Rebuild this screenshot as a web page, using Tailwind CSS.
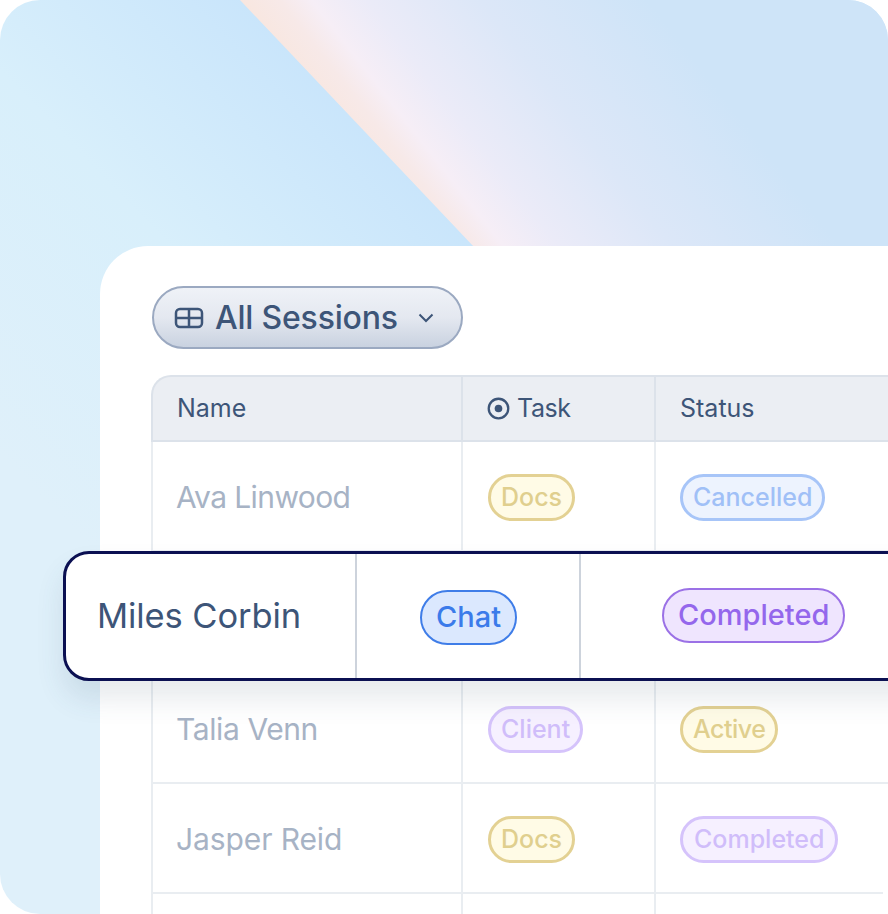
<!DOCTYPE html>
<html lang="en">
<head>
  <meta charset="UTF-8" />
  <title>All Sessions</title>
  <script src="https://cdn.jsdelivr.net/npm/@tailwindcss/browser@4"></script>
</head>
<body class="bg-white">
  <div class="relative w-[888px] h-[914px] overflow-hidden font-[Inter,sans-serif]">
    <!-- background panel and light beam behind the card -->
    <div class="absolute inset-0 overflow-hidden rounded-[40px] bg-[linear-gradient(46deg,#dff0fa_0%,#dff0fa_25%,#d8effb_46%,#c9e5fb_64%)]">
      <div class="absolute inset-0 [clip-path:polygon(240px_0,888px_0,888px_914px,1106px_914px)] bg-[linear-gradient(52deg,#f9e5da_58%,#f7e9e8_62%,#f6eef6_64%,#ebebf8_67.5%,#dce7f8_74.5%,#cee4f8_85%)]"></div>
    </div>

    <div class="relative pt-[246px] pl-[100px]">
      <div class="w-[788px] h-[668px] bg-white rounded-tl-[48px] pt-[40px] pl-[52px]">
        <!-- view picker -->
        <button class="flex items-center w-[311px] h-[63px] pl-[20px] rounded-full border-2 border-[#9ba9c1] bg-[linear-gradient(180deg,#eff2f7_0%,#e4e8f0_50%,#c9d2e0_100%)] text-[#3d5578]">
          <svg class="w-[30px] h-[22px]" viewBox="0 0 30 22" fill="none" stroke="currentColor" stroke-width="2.5">
            <rect x="2" y="2" width="26" height="18" rx="4" />
            <path d="M2 11h26M15 2v18" />
          </svg>
          <span class="ml-[11px] text-[32px] leading-none font-medium tracking-[-0.2px]">All Sessions</span>
          <svg class="ml-[20px] w-[16px] h-[10px]" viewBox="0 0 16 10" fill="none" stroke="currentColor" stroke-width="2">
            <path d="M1.5 1.5 8 8l6.5-6.5" />
          </svg>
        </button>

        <!-- table -->
        <div class="mt-[26px] -ml-[1px] w-[737px] text-[#3d5578]">
          <div class="grid grid-cols-[310px_193px_1fr] h-[67px] bg-[#ebeef3] border-2 border-r-0 border-[#dce2ea] rounded-tl-[20px] text-[25px]">
            <div class="flex items-center pl-[24px] border-r-2 border-[#dce2ea]">Name</div>
            <div class="flex items-center gap-[7px] pl-[24px] border-r-2 border-[#dce2ea]">
              <svg class="w-[23px] h-[23px]" viewBox="0 0 24 24" fill="none">
                <circle cx="12" cy="12" r="10.2" stroke="currentColor" stroke-width="2.4" />
                <circle cx="12" cy="12" r="4" fill="currentColor" />
              </svg>
              <span class="tracking-[-0.4px]">Task</span>
            </div>
            <div class="flex items-center pl-[24px]">Status</div>
          </div>

          <div class="grid grid-cols-[310px_193px_1fr] h-[110px] border-l-2 border-b-2 border-[#e9edf1] text-[30px] text-[#a7b3c5]">
            <div class="flex items-center pl-[23px] pt-[3px] border-r-2 border-[#e9edf1] tracking-[-0.6px]">Ava Linwood</div>
            <div class="flex items-center pl-[25px] pt-[3px] border-r-2 border-[#e9edf1]">
              <span class="flex items-center h-[47px] px-[10px] rounded-full border-[3px] border-[#e3d193] bg-[#fffbe6] text-[#e0cf8e] text-[25px] font-medium">Docs</span>
            </div>
            <div class="flex items-center pl-[24px] pt-[3px]">
              <span class="flex items-center h-[47px] px-[10px] rounded-full border-[3px] border-[#a7c5f8] bg-[#edf3fe] text-[#a0c0f7] text-[25px] font-medium">Cancelled</span>
            </div>
          </div>

          <!-- row covered by the highlighted one -->
          <div class="grid grid-cols-[310px_193px_1fr] h-[122px] border-l-2 border-b-2 border-[#e9edf1]">
            <div class="border-r-2 border-[#e9edf1]"></div>
            <div class="border-r-2 border-[#e9edf1]"></div>
            <div></div>
          </div>

          <div class="grid grid-cols-[310px_193px_1fr] h-[110px] border-l-2 border-b-2 border-[#e9edf1] text-[30px] text-[#a7b3c5]">
            <div class="flex items-center pl-[23px] pt-[3px] border-r-2 border-[#e9edf1] tracking-[-0.4px]">Talia Venn</div>
            <div class="flex items-center pl-[25px] pt-[3px] border-r-2 border-[#e9edf1]">
              <span class="flex items-center h-[47px] px-[10px] rounded-full border-[3px] border-[#d5c3fb] bg-[#f6f0ff] text-[#d0bdfa] text-[25px] font-medium">Client</span>
            </div>
            <div class="flex items-center pl-[24px] pt-[3px]">
              <span class="flex items-center h-[47px] px-[10px] rounded-full border-[3px] border-[#e3d193] bg-[#fffbe6] text-[#e0cf8e] text-[25px] tracking-[-0.5px] font-medium">Active</span>
            </div>
          </div>

          <div class="grid grid-cols-[310px_193px_1fr] h-[110px] border-l-2 border-b-2 border-[#e9edf1] text-[30px] text-[#a7b3c5] w-[732px]">
            <div class="flex items-center pl-[23px] pt-[3px] border-r-2 border-[#e9edf1] tracking-[-0.1px]">Jasper Reid</div>
            <div class="flex items-center pl-[25px] pt-[3px] border-r-2 border-[#e9edf1]">
              <span class="flex items-center h-[47px] px-[10px] rounded-full border-[3px] border-[#e3d193] bg-[#fffbe6] text-[#e0cf8e] text-[25px] font-medium">Docs</span>
            </div>
            <div class="flex items-center pl-[24px] pt-[3px]">
              <span class="flex items-center h-[47px] px-[11px] rounded-full border-[3px] border-[#d5c3fb] bg-[#f6f0ff] text-[#d0bdfa] text-[25px] font-medium">Completed</span>
            </div>
          </div>

          <div class="grid grid-cols-[310px_193px_1fr] h-[40px] border-l-2 border-[#e9edf1]">
            <div class="border-r-2 border-[#e9edf1]"></div>
            <div class="border-r-2 border-[#e9edf1]"></div>
            <div></div>
          </div>
        </div>
      </div>
    </div>

    <!-- highlighted row, lifted over the table -->
    <div class="absolute left-[63px] top-[551px] w-[860px] h-[130px] grid grid-cols-[291px_224px_1fr] bg-white border-[3px] border-[#0b1052] rounded-l-[26px] shadow-[0_18px_28px_rgba(60,80,110,0.12)] text-[#3d5578]">
      <div class="flex items-center pl-[31px] border-r-2 border-[#cdd3dc] text-[34.5px] tracking-[-0.1px]">Miles Corbin</div>
      <div class="flex items-center pl-[63px] pt-[2px] border-r-2 border-[#cdd3dc]">
        <span class="flex items-center h-[55px] px-[14px] rounded-full border-2 border-[#3f7de8] bg-[#dbe8fe] text-[#3b7bea] text-[29px] font-medium">Chat</span>
      </div>
      <div class="flex items-center pl-[81px] pb-[2px]">
        <span class="flex items-center h-[55px] px-[14px] rounded-full border-2 border-[#9b71e6] bg-[#efe5fe] text-[#9467ec] text-[29px] font-medium">Completed</span>
      </div>
    </div>
  </div>
</body>
</html>
